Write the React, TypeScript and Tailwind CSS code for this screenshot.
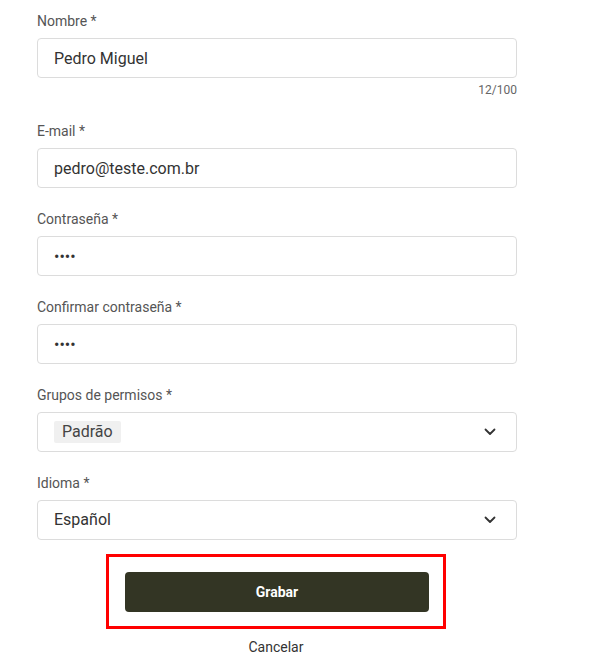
import React from "react";

const Label = ({ text }: { text: string }) => (
  <div className="h-5 leading-[22px] text-[14px] text-[#555555] mb-2">{text}</div>
);

const Chevron = () => (
  <svg width="12" height="8" viewBox="0 0 12 8" fill="none" className="mr-[20px]">
    <path d="M1.5 1.5 6 6l4.5-4.5" stroke="#333" strokeWidth="1.8" strokeLinecap="round" strokeLinejoin="round" />
  </svg>
);

const TextField = ({ label, value, type = "text" }: { label: string; value: string; type?: string }) => (
  <div>
    <Label text={label} />
    <input
      type={type}
      readOnly
      value={value}
      className="w-full h-10 border border-[#dcdcdc] rounded-[4px] pl-4 text-[16px] text-[#333] outline-none bg-white"
    />
  </div>
);

export default function App() {
  return (
    <div className="min-h-screen bg-white" style={{ fontFamily: "Roboto, 'Liberation Sans', sans-serif" }}>
      <div className="w-[480px] ml-[37px] pt-[10px]">
        <TextField label="Nombre *" value="Pedro Miguel" />
        <div className="h-6 flex items-center justify-end text-[12px] text-[#666] mb-[18px]">12/100</div>

        <div className="flex flex-col gap-5">
          <TextField label="E-mail *" value="pedro@teste.com.br" />
          <TextField label="Contraseña *" value="1234" type="password" />
          <TextField label="Confirmar contraseña *" value="1234" type="password" />

          <div>
            <Label text="Grupos de permisos *" />
            <div className="h-10 border border-[#dcdcdc] rounded-[4px] flex items-center justify-between pl-4">
              <span className="bg-[#f0f0f0] rounded-[2px] h-[22px] px-2 flex items-center text-[16px] text-[#444]">Padrão</span>
              <Chevron />
            </div>
          </div>

          <div>
            <Label text="Idioma *" />
            <div className="h-10 border border-[#dcdcdc] rounded-[4px] flex items-center justify-between pl-4">
              <span className="text-[16px] text-[#333]">Español</span>
              <Chevron />
            </div>
          </div>
        </div>

        <div className="mt-[14px] ml-[69px] w-[340px] border-[3px] border-[#ff0000] pt-[15px] pb-[14px] pl-4">
          <button className="w-[304px] h-10 bg-[#333524] rounded-[4px] text-white font-bold text-[14px]">Grabar</button>
        </div>

        <div className="w-[340px] ml-[69px] text-center text-[14px] text-[#333] mt-[8px]">Cancelar</div>
      </div>
    </div>
  );
}
